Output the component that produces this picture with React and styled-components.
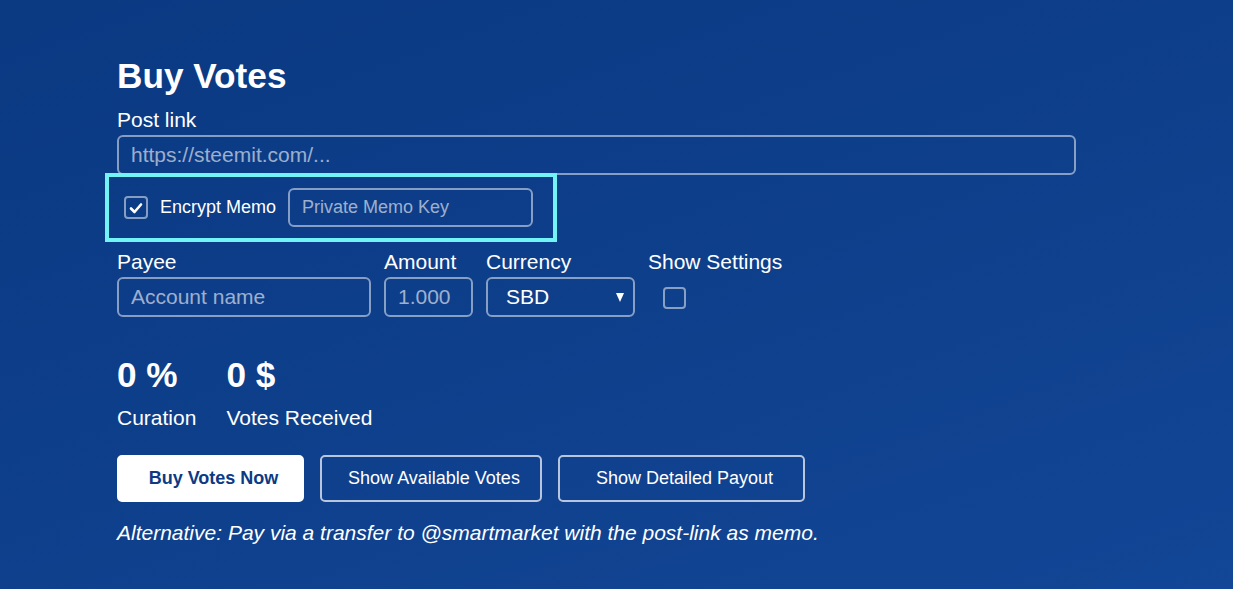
import React from "react";
import styled, { createGlobalStyle } from "styled-components";

const GlobalStyle = createGlobalStyle`
  html, body {
    margin: 0;
    padding: 0;
  }
  body {
    font-family: "Liberation Sans", Arial, sans-serif;
  }
  * {
    box-sizing: border-box;
  }
`;

const App = () => {
  return (
    <Page>
      <GlobalStyle />
      <Form>
        <Title>Buy Votes</Title>
        <Label className="first">Post link</Label>
        <TextInput width={959} placeholder="https://steemit.com/..." />

        <Highlight>
          <Checkbox checked>
            <svg width="14" height="12" viewBox="0 0 14 12">
              <polyline
                points="2,6.5 5.5,10 12,2.5"
                fill="none"
                stroke="#fff"
                strokeWidth="2.6"
                strokeLinecap="round"
                strokeLinejoin="round"
              />
            </svg>
          </Checkbox>
          <CheckText>Encrypt Memo</CheckText>
          <TextInput width={245} height={39} small placeholder="Private Memo Key" />
        </Highlight>

        <FieldRow>
          <Field>
            <Label>Payee</Label>
            <TextInput width={254} placeholder="Account name" />
          </Field>
          <Field>
            <Label>Amount</Label>
            <TextInput width={89} placeholder="1.000" />
          </Field>
          <Field>
            <Label>Currency</Label>
            <Select>
              <span>SBD</span>
              <svg width="8" height="9" viewBox="0 0 8 9">
                <polygon points="0,0 8,0 4,9" fill="#fff" />
              </svg>
            </Select>
          </Field>
          <Field>
            <Label>Show Settings</Label>
            <SettingsBox />
          </Field>
        </FieldRow>

        <Stats>
          <Stat>
            <StatValue>0 %</StatValue>
            <StatLabel>Curation</StatLabel>
          </Stat>
          <Stat>
            <StatValue>0 $</StatValue>
            <StatLabel>Votes Received</StatLabel>
          </Stat>
        </Stats>

        <Buttons>
          <Button primary width={187}>Buy Votes Now</Button>
          <Button width={222}>Show Available Votes</Button>
          <Button width={247}>Show Detailed Payout</Button>
        </Buttons>

        <Note>
          Alternative: Pay via a transfer to @smartmarket with the post-link as
          memo.
        </Note>
      </Form>
    </Page>
  );
};

export default App;

const Page = styled.div`
  min-height: 100vh;
  background: linear-gradient(160deg, #0b3982 0%, #0e3f8b 50%, #124696 100%);
  color: #fff;
  overflow: hidden;
`;

const Form = styled.div`
  display: flex;
  flex-direction: column;
  align-items: flex-start;
  padding: 56px 0 40px 117px;
`;

const Title = styled.h1`
  margin: 0;
  font-size: 35.2px;
  line-height: 40px;
  font-weight: 700;
`;

const Label = styled.div`
  font-size: 21px;
  line-height: 24px;
  color: #fff;
  white-space: nowrap;
  &.first {
    margin-top: 12px;
  }
`;

const TextInput = styled.input`
  width: ${(p) => p.width}px;
  height: ${(p) => p.height || 40}px;
  margin-top: ${(p) => (p.small ? 0 : 3)}px;
  padding: 0 12px;
  background: transparent;
  border: 2px solid rgba(255, 255, 255, 0.5);
  border-radius: 6px;
  color: #fff;
  font-family: inherit;
  font-size: ${(p) => (p.small ? 18 : 21)}px;
  outline: none;
  &::placeholder {
    color: rgba(255, 255, 255, 0.6);
  }
`;

const Highlight = styled.div`
  display: flex;
  align-items: center;
  margin: -2px 0 0 -12px;
  padding: 11px 20px 11px 15px;
  border: 4px solid #72f4f7;
`;

const Checkbox = styled.div`
  width: 24px;
  height: 23px;
  border: 2px solid rgba(255, 255, 255, 0.5);
  border-radius: 4px;
  display: flex;
  align-items: center;
  justify-content: center;
  flex-shrink: 0;
`;

const CheckText = styled.span`
  font-size: 18px;
  margin: 0 12px;
  white-space: nowrap;
`;

const FieldRow = styled.div`
  display: flex;
  gap: 13px;
  margin-top: 8px;
`;

const Field = styled.div`
  display: flex;
  flex-direction: column;
  align-items: flex-start;
`;

const Select = styled.div`
  width: 149px;
  height: 40px;
  margin-top: 3px;
  padding: 0 9px 0 18px;
  border: 2px solid rgba(255, 255, 255, 0.5);
  border-radius: 6px;
  display: flex;
  align-items: center;
  justify-content: space-between;
  font-size: 21px;
  color: #fff;
`;

const SettingsBox = styled.div`
  width: 23px;
  height: 22px;
  margin: 13px 0 0 15px;
  border: 2px solid rgba(255, 255, 255, 0.5);
  border-radius: 4px;
`;

const Stats = styled.div`
  display: flex;
  gap: 30px;
  margin-top: 38px;
`;

const Stat = styled.div`
  display: flex;
  flex-direction: column;
`;

const StatValue = styled.div`
  font-size: 35.2px;
  line-height: 40px;
  font-weight: 700;
`;

const StatLabel = styled.div`
  font-size: 21px;
  line-height: 24px;
  margin-top: 11px;
  white-space: nowrap;
`;

const Buttons = styled.div`
  display: flex;
  gap: 16px;
  margin-top: 25px;
`;

const Button = styled.button`
  width: ${(p) => p.width}px;
  height: 47px;
  padding: 0 0 0 6px;
  border-radius: 5px;
  border: 2px solid ${(p) => (p.primary ? "#fff" : "rgba(255, 255, 255, 0.7)")};
  background: ${(p) => (p.primary ? "#fff" : "transparent")};
  color: ${(p) => (p.primary ? "#0c3a84" : "#fff")};
  font-family: inherit;
  font-size: 18px;
  font-weight: ${(p) => (p.primary ? 700 : 400)};
  cursor: pointer;
`;

const Note = styled.p`
  margin: 19px 0 0;
  font-size: 21px;
  line-height: 24px;
  font-style: italic;
  white-space: nowrap;
`;
